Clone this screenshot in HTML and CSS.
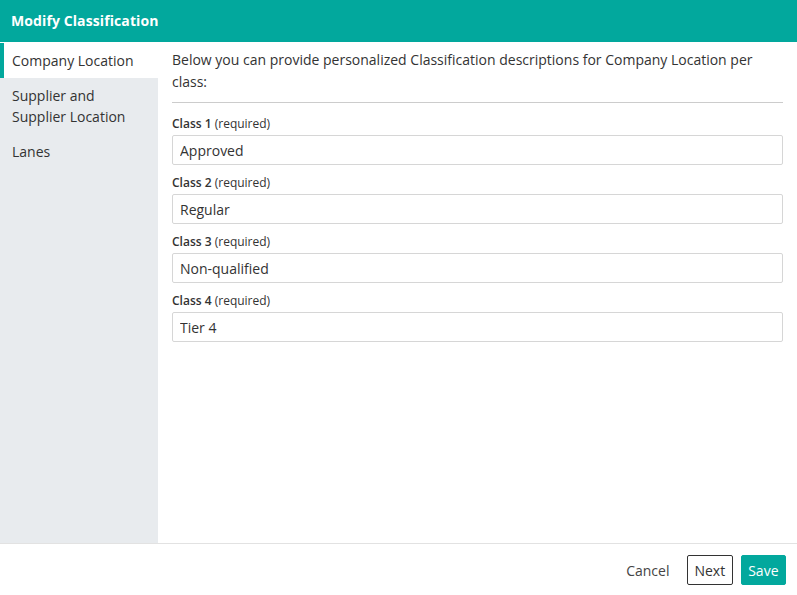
FILE: index.html
```html
<!DOCTYPE html>
<html lang="en">
<head>
  <meta charset="UTF-8">
  <title>Modify Classification</title>
  <link rel="stylesheet" href="styles.css">
</head>
<body>
  <div class="dialog">
    <div class="dialog-header">Modify Classification</div>
    <div class="dialog-body">
      <ul class="side-nav">
        <li class="active">Company Location</li>
        <li>Supplier and Supplier Location</li>
        <li>Lanes</li>
      </ul>
      <form class="content">
        <p class="intro">Below you can provide personalized Classification descriptions for Company Location per class:</p>
        <div class="field">
          <label><b>Class 1</b> (required)</label>
          <input type="text" value="Approved">
        </div>
        <div class="field">
          <label><b>Class 2</b> (required)</label>
          <input type="text" value="Regular">
        </div>
        <div class="field">
          <label><b>Class 3</b> (required)</label>
          <input type="text" value="Non-qualified">
        </div>
        <div class="field">
          <label><b>Class 4</b> (required)</label>
          <input type="text" value="Tier 4">
        </div>
      </form>
    </div>
    <div class="dialog-footer">
      <button type="button" class="btn-link">Cancel</button>
      <button type="button" class="btn-outline">Next</button>
      <button type="button" class="btn-primary">Save</button>
    </div>
  </div>
</body>
</html>
```
FILE: styles.css
```css
html, body {
  margin: 0;
  height: 100%;
}
body {
  font-family: "Open Sans", Arial, sans-serif;
  color: #333;
  background: #fff;
}
.dialog {
  display: flex;
  flex-direction: column;
  height: 595px;
}
.dialog-header {
  height: 42px;
  box-sizing: border-box;
  padding: 11px 11px 0;
  background: #02a89d;
  color: #fff;
  font-weight: 700;
  font-size: 14px;
  letter-spacing: 0.1px;
}
.dialog-body {
  flex: 1;
  display: flex;
  padding-top: 1px;
}
.side-nav {
  list-style: none;
  margin: 0;
  padding: 0;
  width: 158px;
  flex-shrink: 0;
  background: #e8ebee;
}
.side-nav li {
  padding: 7px 12px 7px 12px;
  font-size: 14px;
  line-height: 21px;
  color: #333;
}
.side-nav li.active {
  background: #fff;
  border-left: 4px solid #02a89d;
  padding-left: 8px;
}
.content {
  flex: 1;
  padding: 6px 14px 0;
}
.intro {
  margin: 0;
  font-size: 14px;
  line-height: 22px;
  padding-bottom: 9px;
  border-bottom: 1px solid #ccc;
  margin-bottom: 12px;
}
.field label {
  display: block;
  font-size: 12px;
  line-height: 17px;
  margin-bottom: 3px;
}
.field label b {
  font-weight: 600;
}
.field input {
  display: block;
  width: 100%;
  box-sizing: border-box;
  height: 30px;
  padding: 0 7px;
  border: 1px solid #d6d6d6;
  border-radius: 2px;
  font-family: inherit;
  font-size: 14px;
  color: #333;
  margin-bottom: 9px;
}
.dialog-footer {
  height: 52px;
  box-sizing: border-box;
  border-top: 1px solid #e2e2e2;
  display: flex;
  justify-content: flex-end;
  align-items: flex-start;
  gap: 8px;
  padding: 11px 11px 0;
}
.dialog-footer button {
  height: 30px;
  font-family: inherit;
  font-size: 14px;
  padding: 0 6.5px;
  border-radius: 2px;
  cursor: pointer;
}
.btn-link {
  background: none;
  border: none;
  color: #444;
  margin-right: 3px;
}
.btn-outline {
  background: #fff;
  border: 1px solid #333;
  color: #333;
}
.btn-primary {
  background: #02a89d;
  border: 1px solid #02a89d;
  color: #fff;
}
```
